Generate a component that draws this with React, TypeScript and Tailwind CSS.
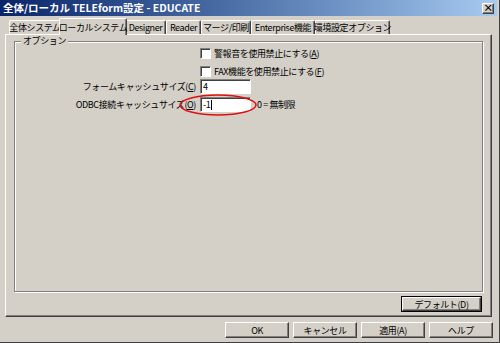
import React from "react"

const raised =
  "border border-t-white border-l-white border-r-[#404040] border-b-[#404040] shadow-[inset_-1px_-1px_#808080]"
const sunken =
  "border border-t-[#808080] border-l-[#808080] border-r-white border-b-white shadow-[inset_1px_1px_#404040]"

const font = { fontFamily: '"MS UI Gothic", "Noto Sans CJK JP", sans-serif' }

type TabProps = { label: string; w: number; active?: boolean }

function Tab({ label, w, active }: TabProps) {
  if (active) {
    return (
      <div
        className="relative z-10 -mx-[2px] -mb-px flex h-[17px] items-center justify-center whitespace-nowrap rounded-t-[2px] border border-b-0 border-t-white border-l-white border-r-[#404040] bg-[#d4d0c8] shadow-[inset_-1px_0_#808080]"
        style={{ width: w + 4 }}
      >
        {label}
      </div>
    )
  }
  return (
    <div
      className="mt-[2px] flex h-[14px] items-center justify-center whitespace-nowrap rounded-t-[2px] border border-b-0 border-t-white border-l-white border-r-[#404040] shadow-[inset_-1px_0_#808080]"
      style={{ width: w }}
    >
      {label}
    </div>
  )
}

function Btn({ label, w, def }: { label: string; w: number; def?: boolean }) {
  return (
    <div
      className={
        "flex h-[16px] items-center justify-center whitespace-nowrap " +
        (def ? "border border-black" : "")
      }
      style={{ width: w }}
    >
      <div className={"flex h-full w-full items-center justify-center " + raised}>{label}</div>
    </div>
  )
}

export default function App() {
  return (
    <div
      className="relative flex h-[343px] w-[500px] flex-col overflow-hidden border-r border-b border-r-[#404040] border-b-[#404040] bg-[#d4d0c8] text-[9px] leading-none tracking-[-0.4px] text-black"
      style={font}
    >
      {/* title bar */}
      <div className="mr-[2px] flex h-[16px] shrink-0 items-center justify-between bg-gradient-to-r from-[#0a246a] to-[#a6caf0] pl-[3px] pr-[3px]">
        <span className="text-[10.5px] font-bold tracking-normal text-white">全体/ローカル TELEform設定 - EDUCATE</span>
        <div className={"flex h-[11px] w-[12px] items-center justify-center bg-[#d4d0c8] text-[10px] font-bold " + raised}>
          ×
        </div>
      </div>

      {/* tabs */}
      <div className="ml-[9px] mt-[3px] flex h-[15px] shrink-0 items-end">
        <Tab label="全体システム" w={52} />
        <Tab label="ローカルシステム" w={64} active />
        <Tab label="Designer" w={41} />
        <Tab label="Reader" w={35} />
        <Tab label="マージ/印刷" w={50} />
        <Tab label="Enterprise機能" w={64} />
        <Tab label="環境設定オプション" w={75} />
      </div>

      {/* tab panel */}
      <div className="ml-[5px] mr-[7px] flex h-[283px] shrink-0 flex-col border border-t-white border-l-white border-r-[#404040] border-b-[#404040] px-[8px] pt-[6px] shadow-[inset_-1px_-1px_#808080]">
        <div className="relative h-[251px] border border-[#808080] shadow-[inset_1px_1px_white,1px_1px_white]">
          <span className="absolute -top-[6px] left-[6px] bg-[#d4d0c8] px-[2px]">オプション</span>

          <div className="ml-[185px] mt-[6px] flex flex-col gap-[7px]">
            <div className="flex items-center gap-[3px]">
              <div className={"h-[11px] w-[11px] bg-white " + sunken} />
              <span>警報音を使用禁止にする(<u>A</u>)</span>
            </div>
            <div className="flex items-center gap-[3px]">
              <div className={"h-[11px] w-[11px] bg-white " + sunken} />
              <span>FAX機能を使用禁止にする(<u>F</u>)</span>
            </div>
          </div>

          <div className="mt-[2px] flex flex-col gap-[3px]">
            <div className="flex items-center">
              <span className="w-[185px] whitespace-nowrap pr-[4px] text-right">フォームキャッシュサイズ(<u>C</u>)</span>
              <div className={"flex h-[15px] w-[51px] items-center bg-white pl-[2px] " + sunken}>4</div>
            </div>
            <div className="flex items-center">
              <span className="w-[185px] whitespace-nowrap pr-[4px] text-right">ODBC接続キャッシュサイズ(<u>O</u>)</span>
              <div className={"flex h-[15px] w-[51px] items-center bg-white pl-[2px] " + sunken}>
                -1<span className="ml-px inline-block h-[10px] w-px bg-black" />
              </div>
              <span className="ml-[6px] whitespace-nowrap">0 = 無制限</span>
            </div>
          </div>
        </div>

        <div className="mt-[4px] flex justify-end pr-[1px]">
          <Btn label="デフォルト(D)" w={81} def />
        </div>
      </div>

      {/* bottom buttons */}
      <div className="mt-[5px] flex justify-end gap-[4px] pr-[6px]">
        <Btn label="OK" w={64} />
        <Btn label="キャンセル" w={64} />
        <Btn label="適用(A)" w={64} />
        <Btn label="ヘルプ" w={64} />
      </div>

      {/* red annotation ellipse */}
      <svg className="pointer-events-none absolute left-0 top-0" width="500" height="343">
        <ellipse cx="218" cy="105" rx="38" ry="10" fill="none" stroke="#e01010" strokeWidth="1.5" />
      </svg>
    </div>
  )
}
